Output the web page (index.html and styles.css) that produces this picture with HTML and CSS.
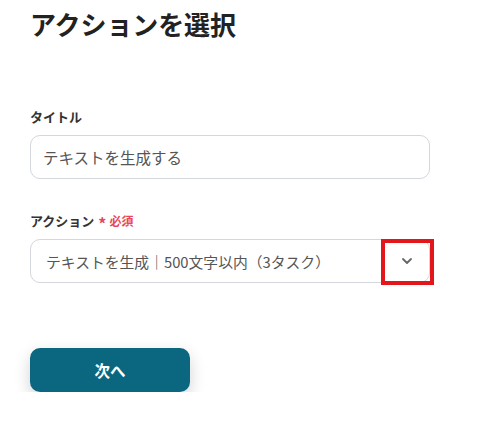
FILE: index.html
```html
<!DOCTYPE html>
<html lang="ja">
<head>
<meta charset="utf-8">
<link rel="stylesheet" href="styles.css">
</head>
<body>
<main class="page">
  <h1 class="title">アクションを選択</h1>
  <div class="field field-first">
    <label class="label">タイトル</label>
    <div class="input">テキストを生成する</div>
  </div>
  <div class="field field-second">
    <label class="label">アクション<span class="req"><span class="star">*</span>必須</span></label>
    <div class="select">
      <span class="select-text">テキストを生成｜500文字以内（3タスク）</span>
      <span class="chevron">
        <svg width="12" height="8" viewBox="0 0 12 8"><path d="M2 2 L6 6 L10 2" fill="none" stroke="#666" stroke-width="1.8" stroke-linecap="round" stroke-linejoin="round"/></svg>
      </span>
      <span class="highlight"></span>
    </div>
  </div>
  <button class="next">次へ</button>
</main>
</body>
</html>
```
FILE: styles.css
```css
* { box-sizing: border-box; }
html, body { margin: 0; padding: 0; background: #fff; }
body {
  font-family: "Noto Sans CJK JP", "Noto Sans", sans-serif;
  color: #333;
}
.page {
  padding: 6px 54px 0 30px;
  width: 484px;
}
.title {
  margin: 0;
  font-size: 26px;
  line-height: 36px;
  font-weight: 700;
  color: #222;
  letter-spacing: -0.1px;
}
.field { display: flex; flex-direction: column; gap: 8px; }
.field-first { margin-top: 65px; }
.field-second { margin-top: 32px; }
.label {
  font-size: 13px;
  line-height: 20px;
  font-weight: 700;
  color: #333;
  display: flex;
  align-items: center;
}
.req {
  color: #e8475a;
  font-size: 12px;
  margin-left: 4px;
  display: flex;
  align-items: center;
}
.star { font-size: 16px; margin-right: 3px; line-height: 1; position: relative; top: 2px; }
.input, .select {
  width: 400px;
  height: 44px;
  border: 1px solid #d3d6dc;
  border-radius: 10px;
  color: #555;
  display: flex;
  align-items: center;
}
.input { padding-left: 12px; font-size: 15.5px; }
.select { padding-left: 15px; position: relative; font-size: 14.8px; }
.select-text { flex: 1; }
.chevron {
  width: 53px;
  margin-right: -4px;
  display: flex;
  justify-content: center;
  align-items: center;
}
.highlight {
  position: absolute;
  right: -5px;
  top: -1px;
  width: 53px;
  height: 46px;
  border: 4px solid #e3171b;
}
.next {
  margin-top: 65px;
  width: 160px;
  height: 44px;
  border: none;
  border-radius: 10px;
  background: #0b6780;
  color: #fff;
  font-family: inherit;
  font-size: 15.5px;
  font-weight: 700;
  box-shadow: 0 6px 16px rgba(0, 0, 0, 0.18);
}
```
